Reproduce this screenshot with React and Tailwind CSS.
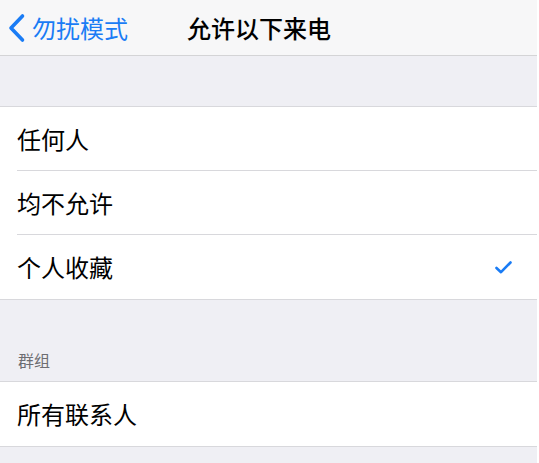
import React from "react";

const font = { fontFamily: '"Noto Sans CJK SC", "Noto Sans", sans-serif' };

const Row = ({ label, checked, last }) => (
  <div className="flex h-[64px] items-stretch pl-[17px]">
    <div
      className={`flex flex-1 items-center justify-between pr-[25px] ${
        last ? "" : "border-b border-[#d8d8dc]"
      }`}
    >
      <span className="text-[24px] leading-none text-black">{label}</span>
      {checked && (
        <svg width="17" height="13" viewBox="0 0 17 13" fill="none">
          <path
            d="M1.5 7 L6 11.2 L15.5 1.5"
            stroke="#1a7cf5"
            strokeWidth="2.6"
            strokeLinecap="round"
            strokeLinejoin="round"
          />
        </svg>
      )}
    </div>
  </div>
);

export default function App() {
  return (
    <div className="min-h-screen w-[539px] bg-white" style={font}>
      <div className="w-[537px] min-h-[463px] bg-[#efeff4]">
        <header className="flex h-[56px] items-center border-b border-[#d4d4d6] bg-[#f7f7f8]">
          <div className="flex items-center pl-[7px]">
            <svg width="20" height="30" viewBox="0 0 20 30" fill="none">
              <path
                d="M15.5 3 L4 15 L15.5 27"
                stroke="#1a7cf5"
                strokeWidth="3.6"
                strokeLinecap="round"
                strokeLinejoin="round"
              />
            </svg>
            <span className="ml-[5px] text-[24px] leading-none text-[#1a7cf5]">勿扰模式</span>
          </div>
          <h1 className="ml-[59px] text-[24px] font-medium leading-none text-black">允许以下来电</h1>
        </header>

        <div className="h-[50px]" />

        <section className="border-y border-[#d8d8dc] bg-white">
          <Row label="任何人" />
          <Row label="均不允许" />
          <Row label="个人收藏" checked last />
        </section>

        <div className="flex h-[81px] items-end pb-[13px] pl-[18px]">
          <span className="text-[16px] leading-none text-[#6d6d72]">群组</span>
        </div>

        <section className="border-y border-[#d8d8dc] bg-white">
          <Row label="所有联系人" last />
        </section>
      </div>
    </div>
  );
}
